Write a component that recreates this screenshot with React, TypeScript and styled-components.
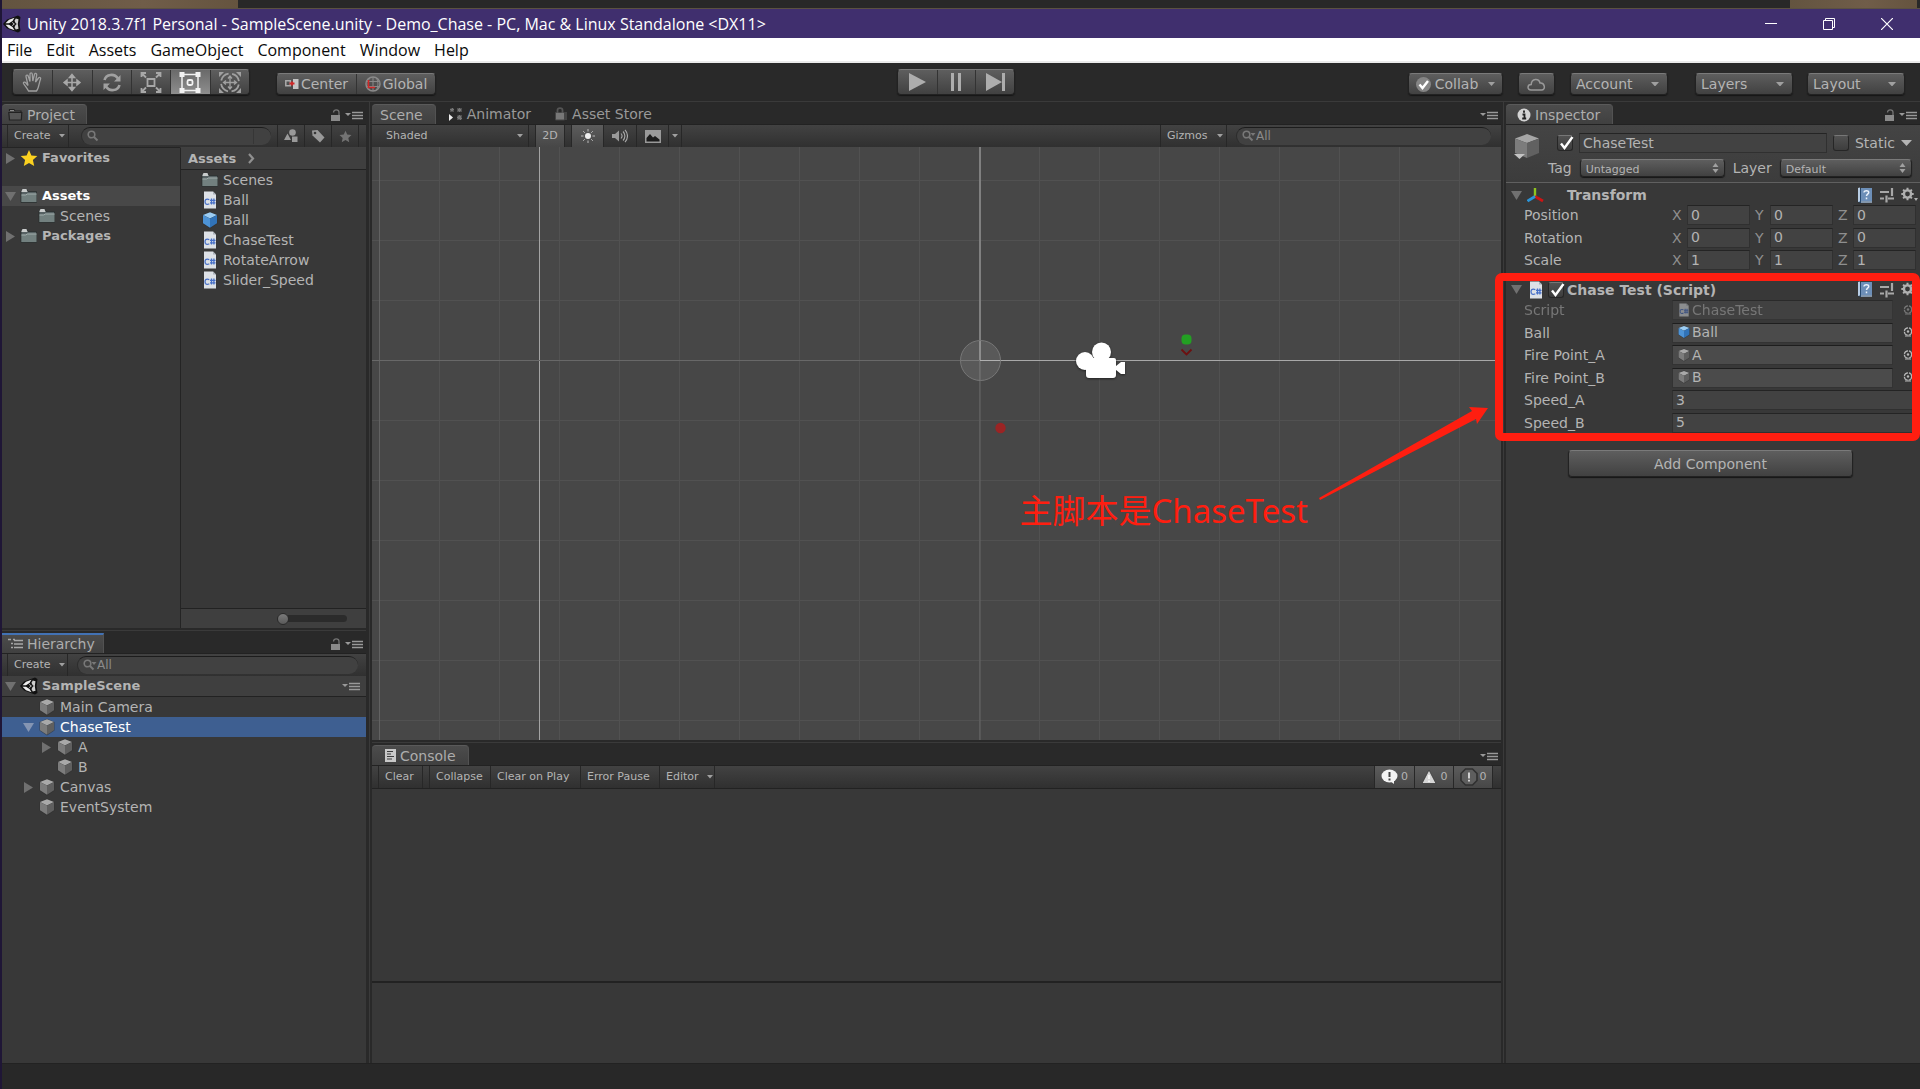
import React from "react";
import styled, { createGlobalStyle, css } from "styled-components";

const uiFont = '"DejaVu Sans", Verdana, sans-serif';
const systemFont = '"Open Sans", "Noto Sans", "Noto Sans CJK SC", sans-serif';

const c = {
  chrome: "#292929",
  panel: "#383838",
  edge: "#1f1f1f",
  seam: "#3a3a3a",
  text: "#b4b4b4",
  dim: "#6e6e6e",
  icon: "#a0a0a0",
  annotation: "#ff1e10",
};

const GlobalStyle = createGlobalStyle`
  * { box-sizing: border-box; }
  body { margin: 0; background: #1f1636; }
  button, input, select { font: inherit; color: inherit; margin: 0; padding: 0; border: 0; border-radius: 0; outline: 0; background: none; }
  ul { list-style: none; margin: 0; padding: 0; }
  svg { display: block; flex: none; }
`;

/* ---------- window frame ---------- */

const Shell = styled.div`
  min-height: 100vh;
  display: flex;
  flex-direction: column;
  padding-left: 2px;
  overflow: hidden;
  background: #1f1636;
  color: ${c.text};
  font: 14px/20px ${uiFont};
`;

const DesktopStrip = styled.div`
  height: 9px;
  display: flex;
  background: #282828;
  border-bottom: 1px solid #5b5142;
`;

const DesktopPatch = styled.div<{ $w: number; $push?: boolean }>`
  width: ${(p) => p.$w}px;
  margin-left: ${(p) => (p.$push ? "auto" : "0")};
  margin-right: ${(p) => (p.$push ? "3px" : "0")};
  background: linear-gradient(90deg, #635440, #705d49 60%, #65543f);
`;

const TitleBar = styled.header`
  height: 29px;
  display: flex;
  align-items: center;
  gap: 6px;
  padding: 0 4px 0 1px;
  background: #402f6e;
  color: #fff;
  font: 16px/28px ${systemFont};
  white-space: nowrap;
`;

const WindowButtons = styled.div`
  display: flex;
  margin-left: auto;
`;

const WindowButton = styled.button`
  width: 58px;
  height: 28px;
  display: flex;
  align-items: center;
  justify-content: center;
`;

const MenuBar = styled.nav`
  height: 25px;
  display: flex;
  background: #fff;
  border-bottom: 2px solid #ebebeb;
  color: #0a0a0a;
  font: 16px/24px ${systemFont};
`;

const MenuItem = styled.button`
  height: 23px;
  padding: 0 7px;
  white-space: nowrap;
  &:first-child { padding-left: 5px; }
`;

/* ---------- main toolbar ---------- */

const raised = css`
  border: 1px solid #222;
  border-top-color: #7a7a7a;
  border-radius: 4px;
  background: linear-gradient(#5e5e5e, #414141);
  box-shadow: 0 1px 1px #161616;
`;

const MainToolbar = styled.div`
  height: 39px;
  display: grid;
  grid-template-columns: 1fr auto 1fr;
  align-items: end;
  padding: 0 15px 6px 5px;
  background: ${c.chrome};
  border-bottom: 1px solid ${c.seam};
`;

const ToolbarSide = styled.div<{ $end?: boolean }>`
  display: flex;
  align-items: flex-end;
  justify-content: ${(p) => (p.$end ? "flex-end" : "flex-start")};
  gap: ${(p) => (p.$end ? 15 : 26)}px;
  padding-left: ${(p) => (p.$end ? 0 : 5)}px;
`;

const ButtonStrip = styled.div<{ $w: number; $h: number }>`
  ${raised}
  width: ${(p) => p.$w}px;
  height: ${(p) => p.$h}px;
  display: grid;
  grid-auto-flow: column;
  grid-auto-columns: 1fr;
  overflow: hidden;
`;

const StripButton = styled.button<{ $on?: boolean }>`
  display: flex;
  align-items: center;
  justify-content: center;
  gap: 2px;
  color: ${c.text};
  background: ${(p) => (p.$on ? "linear-gradient(#6a6a6a, #8e8e8e)" : "none")};
  & + & { border-left: 1px solid #333; }
`;

const RaisedButton = styled.button<{ $w: number; $h?: number }>`
  ${raised}
  width: ${(p) => p.$w}px;
  height: ${(p) => p.$h ?? 22}px;
  display: flex;
  align-items: center;
  justify-content: center;
  gap: 4px;
`;

const Group = styled.div<{ $gap: number; $left?: number }>`
  display: flex;
  gap: ${(p) => p.$gap}px;
  margin-left: ${(p) => p.$left ?? 0}px;
`;

/* ---------- drop-downs ---------- */

const SelectFrame = styled.span<{ $w?: number; $kind: "raised" | "flat" | "field" }>`
  position: relative;
  display: flex;
  align-items: center;
  ${(p) => (p.$w ? `width: ${p.$w}px;` : "flex: 1 1 0; min-width: 0;")}
  height: ${(p) => (p.$kind === "field" ? 18 : 22)}px;
  ${(p) => p.$kind !== "flat" && raised}
  font-size: ${(p) => (p.$kind === "raised" ? 14 : 11)}px;
  select {
    appearance: none;
    width: 100%;
    height: 100%;
    padding-left: ${(p) => (p.$kind === "flat" ? 7 : 5)}px;
    color: ${c.text};
  }
  svg {
    position: absolute;
    right: ${(p) => (p.$kind === "raised" ? 8 : 5)}px;
    pointer-events: none;
  }
`;

/* ---------- docks ---------- */

const Workspace = styled.main`
  flex: 1;
  display: grid;
  grid-template-columns: 367fr 1134fr 417fr;
  background: ${c.chrome};
`;

const Column = styled.div<{ $rows: string; $first?: boolean; $last?: boolean }>`
  min-width: 0;
  display: grid;
  grid-template-rows: ${(p) => p.$rows};
  border-left: ${(p) => (p.$first ? "0" : `1px solid ${c.seam}`)};
  padding-left: ${(p) => (p.$first ? 0 : 2)}px;
  padding-right: ${(p) => (p.$first ? 3 : p.$last ? 0 : 2)}px;
`;

const Dock = styled.section<{ $seam?: boolean }>`
  min-width: 0;
  min-height: 0;
  display: flex;
  flex-direction: column;
  ${(p) => p.$seam && `padding-bottom: 2px; border-bottom: 1px solid ${c.seam};`}
`;

const TabBar = styled.div`
  flex: none;
  height: 22px;
  display: flex;
  align-items: flex-end;
  background: ${c.chrome};
`;

const Tab = styled.button<{ $active?: boolean; $focus?: boolean; $l?: number; $r?: number }>`
  height: 20px;
  display: flex;
  align-items: center;
  gap: 4px;
  padding: 0 ${(p) => p.$r ?? 12}px 0 ${(p) => p.$l ?? 6}px;
  color: ${(p) => (p.$active ? "#adadad" : "#999")};
  white-space: nowrap;
  ${(p) =>
    p.$active &&
    css`
      background: linear-gradient(#4c4c4c, #404040);
      border-top: ${p.$focus ? "2px solid #4272b5" : "1px solid #5a5a5a"};
      border-right: 1px solid #525252;
      border-radius: ${p.$focus ? "0" : "4px 4px 0 0"};
    `}
`;

const TabTools = styled.div`
  display: flex;
  align-items: center;
  gap: 4px;
  height: 18px;
  margin-left: auto;
  padding-right: 3px;
`;

const IconButton = styled.button`
  display: flex;
  align-items: center;
  justify-content: center;
`;

const PanelToolbar = styled.div<{ $pad?: number }>`
  flex: none;
  height: 23px;
  display: flex;
  align-items: stretch;
  padding-left: ${(p) => p.$pad ?? 5}px;
  background: linear-gradient(#424242, #303030);
  border-top: 1px solid #222;
  font-size: 11px;
`;

const ToolCell = styled.button<{ $w: number; $on?: boolean; $open?: boolean; $text?: boolean; $gap?: number }>`
  width: ${(p) => p.$w}px;
  display: flex;
  align-items: center;
  justify-content: ${(p) => (p.$text ? "space-between" : "center")};
  gap: ${(p) => p.$gap ?? 8}px;
  padding: ${(p) => (p.$text ? "0 3px 0 6px" : "0")};
  color: ${c.text};
  white-space: nowrap;
  border-left: 1px solid #272727;
  border-right: ${(p) => (p.$open ? "1px solid #272727" : "0")};
  background: ${(p) => (p.$on ? "linear-gradient(#5c5c5c, #474747)" : "none")};
`;

const Spacer = styled.div<{ $w?: number }>`
  ${(p) => (p.$w ? `flex: none; width: ${p.$w}px;` : "flex: 1;")}
`;

const SearchBox = styled.label<{ $w?: number }>`
  ${(p) => (p.$w ? `width: ${p.$w}px;` : "flex: 1; min-width: 0;")}
  height: 18px;
  margin-top: 2px;
  display: flex;
  align-items: center;
  padding: 0 6px 1px 5px;
  border-radius: 9px;
  border-top: 1px solid #1c1c1c;
  border-left: 1px solid #2c2c2c;
  background: #414141;
  input {
    min-width: 0;
    flex: 1;
    height: 15px;
    font-size: 12px;
    line-height: 14px;
    color: #8a8a8a;
  }
  input::placeholder { color: #8a8a8a; opacity: 1; }
`;

const SearchCap = styled.span`
  width: 12px;
  height: 15px;
  border-left: 1px solid #363636;
`;

/* ---------- project & hierarchy ---------- */

const Split = styled.div`
  flex: 1;
  min-height: 0;
  display: grid;
  grid-template-columns: 178fr 186fr;
  background: ${c.panel};
`;

const Pane = styled.div<{ $line?: boolean }>`
  display: flex;
  flex-direction: column;
  border-top: 1px solid ${(p) => (p.$line ? "#242424" : "#404040")};
  border-left: ${(p) => (p.$line ? "0" : "1px solid #242424")};
`;

const Breadcrumb = styled.div`
  height: 22px;
  display: flex;
  align-items: center;
  gap: 12px;
  padding-left: 7px;
  background: #3f3f3f;
  border-bottom: 1px solid #222;
  font-weight: bold;
  font-size: 13px;
`;

const FileList = styled.ul`
  flex: 1;
  padding-left: 2px;
`;

const Row = styled.li<{ $depth?: number; $tone?: "open" | "selected"; $bold?: boolean; $after?: number }>`
  height: 20px;
  display: flex;
  align-items: center;
  gap: 4px;
  padding-left: ${(p) => (p.$depth ?? 0) * 18 + 2}px;
  margin-bottom: ${(p) => p.$after ?? 0}px;
  font-size: ${(p) => (p.$bold ? 13 : 14)}px;
  font-weight: ${(p) => (p.$bold ? "bold" : "normal")};
  color: ${(p) => (p.$tone ? "#fff" : c.text)};
  background: ${(p) => (p.$tone === "selected" ? "#3e5f91" : p.$tone === "open" ? "#484848" : "none")};
`;

const Fold = styled.span`
  width: 12px;
  display: flex;
  justify-content: center;
`;

const ZoomBar = styled.div`
  height: 20px;
  display: flex;
  align-items: center;
  justify-content: flex-end;
  padding-right: 19px;
  border-top: 1px solid #222;
  background: #3f3f3f;
`;

const ZoomSlider = styled.input`
  appearance: none;
  width: 70px;
  height: 7px;
  border-radius: 4px;
  background: linear-gradient(90deg, #3f3f3f 6px, #2b2b2b 6px);
  &::-webkit-slider-thumb {
    appearance: none;
    width: 12px;
    height: 12px;
    border-radius: 50%;
    border: 1px solid #2a2a2a;
    background: linear-gradient(#7a7a7a, #5a5a5a);
  }
`;

const TreeBody = styled.div`
  flex: 1;
  background: ${c.panel};
`;

const SceneRow = styled.div`
  height: 21px;
  display: flex;
  align-items: center;
  gap: 4px;
  padding: 0 6px 0 2px;
  background: #3f3f3f;
  border-bottom: 1px solid #222;
  font-size: 13px;
  font-weight: bold;
`;

/* ---------- scene ---------- */

const SceneCanvas = styled.div`
  position: relative;
  flex: 1;
  overflow: hidden;
  background: #474747;
  > svg { position: absolute; inset: 0; }
`;

const NoteText = styled.p`
  position: absolute;
  right: 193px;
  top: 344px;
  margin: 0;
  color: ${c.annotation};
  font: 33px/40px "Noto Sans", "Noto Sans CJK SC", sans-serif;
  white-space: nowrap;
`;

const NoteArrow = styled.span`
  position: absolute;
  right: 13px;
  top: 259px;
`;

/* ---------- console ---------- */

const ConsoleList = styled.div`
  flex: 190;
  background: ${c.panel};
  border-top: 1px solid #222;
  border-bottom: 2px solid #222;
`;

const ConsoleDetail = styled.div`
  flex: 79;
  background: ${c.panel};
`;

/* ---------- inspector ---------- */

const InspectorBody = styled.div`
  flex: 1;
  background: ${c.panel};
`;

const ObjectHeader = styled.div`
  display: flex;
  padding: 8px 8px 4px;
  border-top: 1px solid #222;
  border-bottom: 1px solid #606060;
  background: linear-gradient(#444, #3c3c3c);
`;

const ObjectLines = styled.div`
  flex: 1;
  min-width: 0;
  display: flex;
  flex-direction: column;
  gap: 5px;
  padding-left: 8px;
`;

const Line = styled.div<{ $gap: number; $left?: number }>`
  display: flex;
  align-items: center;
  gap: ${(p) => p.$gap}px;
  padding-left: ${(p) => p.$left ?? 0}px;
  label { white-space: nowrap; }
`;

const Field = styled.input`
  flex: 1;
  min-width: 0;
  width: 0;
  height: 20px;
  padding: 0 3px 1px;
  background: #424242;
  border: 1px solid #303030;
  border-top-color: #242424;
  color: ${c.text};
`;

const CheckFrame = styled.span`
  position: relative;
  width: 16px;
  height: 16px;
  flex: none;
  display: block;
  input {
    appearance: none;
    display: block;
    width: 16px;
    height: 16px;
    border: 1px solid #262626;
    border-top-color: #777;
    border-radius: 3px;
    background: linear-gradient(#525252, #3d3d3d);
  }
  svg { position: absolute; left: 2px; top: 0; pointer-events: none; }
`;

const Component = styled.section`
  position: relative;
`;

const ComponentTitle = styled.div<{ $h: number; $top: number }>`
  height: ${(p) => p.$h}px;
  display: flex;
  align-items: center;
  padding: ${(p) => p.$top}px 2px 0 5px;
  h2 { flex: 1; margin: 0; font-size: 14px; line-height: 20px; font-weight: bold; white-space: nowrap; }
`;

const Slot = styled.span<{ $w: number }>`
  flex: none;
  width: ${(p) => p.$w}px;
  padding-left: ${(p) => (p.$w === 24 ? 5 : 0)}px;
`;

const Properties = styled.div<{ $h: number }>`
  height: ${(p) => p.$h}px;
  display: grid;
  grid-auto-rows: 1fr;
  padding: 0 4px 0 18px;
`;

const Property = styled.div<{ $off?: boolean }>`
  display: flex;
  align-items: flex-start;
  opacity: ${(p) => (p.$off ? 0.5 : 1)};
  > label, > span:first-child { flex: none; width: 148px; white-space: nowrap; }
`;

const Vector = styled.div`
  flex: 1;
  display: grid;
  grid-template-columns: repeat(3, 1fr);
  gap: 5px;
  label { display: flex; min-width: 0; }
  label > span { width: 15px; flex: none; color: #8f8f8f; }
`;

const ObjectField = styled.button`
  flex: 1;
  height: 20px;
  display: flex;
  align-items: center;
  gap: 1px;
  padding: 0 4px 1px;
  background: #4b4b4b;
  border: 1px solid #333;
  border-top-color: #1e1e1e;
`;

const Picker = styled.button`
  width: 14px;
  height: 19px;
  margin: 0 1px 0 8px;
  display: flex;
  align-items: center;
  justify-content: center;
`;

const Highlight = styled.div`
  position: absolute;
  z-index: 2;
  inset: 0 0 -6px -11px;
  border: 8px solid ${c.annotation};
  border-radius: 7px;
  pointer-events: none;
`;

const AddRow = styled.div`
  display: flex;
  justify-content: center;
  padding: 15px 5px 0 0;
`;

const StatusBar = styled.footer`
  height: 26px;
  background: #282828;
  border-top: 1px solid #222;
`;

/* ---------- icons ---------- */

const Down = ({ s = 7, fill = c.icon }: { s?: number; fill?: string }) => (
  <svg width={s} height={(s + 1) / 2} viewBox="0 0 8 4" preserveAspectRatio="none"><path d="M0 0h8L4 4z" fill={fill} /></svg>
);
const Right = () => (
  <svg width="9" height="11" viewBox="0 0 9 11"><path d="M0 0 9 5.500 0 11z" fill="#707070" /></svg>
);
const Open = ({ fill = "#707070" }: { fill?: string }) => (
  <svg width="11" height="9" viewBox="0 0 11 9"><path d="M0 0h11L5.500 9z" fill={fill} /></svg>
);
const UpDown = () => (
  <svg width="7" height="10" viewBox="0 0 7 10"><path d="M3.500 0 6.500 4h-6zM.5 6h6l-3 4z" fill={c.icon} /></svg>
);
const PaneMenu = () => (
  <svg width="18" height="9" viewBox="0 0 18 9"><path d="M0 2h6L3 5z" fill="#999" /><path d="M7 1.500h11M7 4.500h11M7 7.500h11" stroke="#999" strokeWidth="1.400" /></svg>
);
const Lock = () => (
  <svg width="10" height="13" viewBox="0 0 10 13"><path d="M0 6h9v6H0z" fill="#8a8a8a" /><path d="M2.500 3.500C2.500 0 8 0 8 3.500V6" fill="none" stroke="#757575" strokeWidth="1.300" /></svg>
);
const UnityMark = ({ size = 18 }: { size?: number }) => (
  <svg width={size} height={size} viewBox="0 0 18 18">
    <path d="M0 9 4 4.500 15 .5 17.500 2 16.500 9l1 7-2.500 1.500L4 13.500z" fill="#111" />
    <path d="M2.500 8.200 6 4.800 11.500 2.800 9.500 6 6 8.200zM2.500 9.800 6 13.200l5.500 2L9.500 12 6 9.800z" fill="#ececec" />
    <path d="M12.800 3.400 15.500 4.200 14.800 9l.7 4.800-2.700.8L11.400 12 12.800 9 11.400 6z" fill="#cfcfcf" />
    <path d="M7.500 9h6M11 6.500 12.400 9 11 11.500" stroke="#111" strokeWidth="1.200" fill="none" />
    <path d="M9.200 7.400 11.400 9l-2.200 1.600" stroke="#ececec" strokeWidth=".8" fill="none" />
  </svg>
);
const Folder = () => (
  <svg width="18" height="16" viewBox="0 0 18 16">
    <path d="M1 3.500 2 1.500h5l1 2h8.500V14.500H1z" fill="#566163" stroke="#2a2e2f" strokeWidth=".8" />
    <path d="M1.500 3 2.500 1h4l1 3h-6z" fill="#c9cccc" />
    <path d="M1.500 6.500h4l2-1h9V14h-15z" fill="#72807f" />
    <path d="M1.500 7h4l2-1h9" stroke="#a0acac" fill="none" />
  </svg>
);
const FolderTab = () => (
  <svg width="15" height="13" viewBox="0 0 15 13"><path d="M1.500 3V1.500h4.500l1 1.500h6v1.500M.8 4.500h13l-.5 7.500H1.500z" fill="#565656" stroke="#222" strokeWidth="1.200" /><path d="M2 2.500h4" stroke="#8a8a8a" /></svg>
);
const CSharp = ({ size = 18 }: { size?: number }) => (
  <svg width={size} height={size} viewBox="0 0 18 18">
    <path d="M3 .5h9l3 3V17.500H3z" fill="#dde1e6" />
    <path d="M12 .5v3h3z" fill="#aab0b8" />
    <path d="M8.300 8.600c-3.500-1.200-5 .6-4 3.600.7 1.500 2.500 1.400 4 .6M10.500 7.500v6M12.900 7.500v6M9 9.300h5.500M9 11.800h5.500" fill="none" stroke="#4770c8" strokeWidth="1.300" />
  </svg>
);
const Cube = ({ blue, size = 18 }: { blue?: boolean; size?: number }) => {
  const f = blue ? ["#9ccdf3", "#4d93d6", "#3173b8"] : ["#a9a9a9", "#7c7c7c", "#5f5f5f"];
  return (
    <svg width={size} height={size} viewBox="0 0 18 18">
      <path d="M9 .8 16.500 4v8.500L9 17.500 1.500 12.500V4z" fill="#2b2b2b" opacity=".6" />
      <path d="M9 1.200 16 4 9 7.400 2 4z" fill={f[0]} />
      <path d="M2 4 9 7.400v9.400l-7-4.600z" fill={f[1]} />
      <path d="M16 4 9 7.400v9.400l7-4.600z" fill={f[2]} />
    </svg>
  );
};
const Star = ({ fill, size = 18 }: { fill: string; size?: number }) => (
  <svg width={size} height={size} viewBox="0 0 18 18"><path d="M9 1l2.400 5.400 5.900.6-4.400 4 1.300 5.900L9 13.900 3.800 16.900l1.300-5.900-4.400-4 5.900-.6z" fill={fill} /></svg>
);
const Magnifier = ({ menu }: { menu?: boolean }) => (
  <svg width={menu ? 14 : 12} height="12" viewBox={menu ? "0 0 14 12" : "0 0 12 12"}>
    <circle cx="4.500" cy="4.500" r="3.300" fill="none" stroke="#787878" strokeWidth="1.600" />
    <path d="M7 7l3.500 3.500" stroke="#787878" strokeWidth="2" />
    {menu && <path d="M8.500 3h5L11 6z" fill="#787878" />}
  </svg>
);
const Check = ({ s = 16 }: { s?: number }) => (
  <svg width={s} height={s} viewBox="0 0 16 16"><path d="M2 8.500 5.500 13 13.500 2" fill="none" stroke="#fff" strokeWidth="2.400" /></svg>
);
const Book = () => (
  <svg width="16" height="17" viewBox="0 0 16 17">
    <path d="M1 1.500h14v14l-11 .5-3-1z" fill="#27496f" />
    <path d="M4 1h11v13H4z" fill="#6d8fb8" /><path d="M1 1l2-.5V14.500l-2 .5z" fill="#b8cde4" />
    <path d="M4 15h11" stroke="#dce6f0" />
    <path d="M7 5.500c0-2.500 5-2.500 4.700.2-.2 1.500-2.200 1.500-2.200 3.300M9.500 10.500v1.700" stroke="#e9f1fa" strokeWidth="1.500" fill="none" />
  </svg>
);
const Preset = () => (
  <svg width="14" height="16" viewBox="0 0 14 16"><path d="M0 5h9M12 1v8M0 11.500h4M6.500 8.500v7M8 11.500h6" stroke="#a8a8a8" strokeWidth="2.200" /></svg>
);
const Gear = () => (
  <svg width="17" height="16" viewBox="0 0 17 16">
    <circle cx="6.500" cy="7" r="3.600" fill="none" stroke="#b0b0b0" strokeWidth="2.400" />
    <path d="M6.500 .8v2.400M6.500 10.800v2.400M.3 7h2.400M10.300 7h2.400M2.100 2.600l1.700 1.700M9.200 9.700l1.700 1.700M10.900 2.600 9.200 4.300M3.800 9.700l-1.700 1.700" stroke="#b0b0b0" strokeWidth="2" />
    <path d="M13 11h4l-2 3z" fill="#b0b0b0" />
  </svg>
);
const Target = () => (
  <svg width="10" height="10" viewBox="0 0 10 10"><circle cx="5" cy="4.500" r="3.700" fill="none" stroke="#b8b8b8" strokeWidth="1.200" strokeDasharray="5 1" /><circle cx="5" cy="4.500" r="1.200" fill="#b8b8b8" /><path d="M2 9h6" stroke="#b8b8b8" /></svg>
);

const toolIcons: [string, React.ReactNode][] = [
  ["Hand", <path key="p" d="M6.500 20C5 17 3 15 1.500 12.500 1 11 3 10.500 4 12l2 2.500L4 5.500C3.700 4 5.700 3.500 6.200 5L8 10.500 8 3c0-1.500 2.200-1.500 2.300 0l.5 7 1.700-6.700c.4-1.500 2.400-1 2.200.5L13.500 11 16.500 7c1-1.300 2.700-.3 2 1.200C17 11.500 17 17 14.500 20z" fill="none" stroke="#a0a0a0" strokeWidth="1.300" />],
  ["Move", <path key="p" d="M11 5v13M4.500 11.500h13M11 3.500l2.500 3h-5zM11 19.500l2.500-3h-5zM3 11.500 6 9v5zM19 11.500 16 9v5z" fill="#a8a8a8" stroke="#a8a8a8" strokeWidth="1.500" />],
  ["Rotate", <g key="p"><path d="M3.500 9C5 3 13.500 2 17 7.500M18.500 14c-1.500 6-10 7-13.500 1.500" fill="none" stroke="#a0a0a0" strokeWidth="2.600" /><path d="M19.500 4v6.500h-6.500zM2.500 19v-6.500H9z" fill="#a0a0a0" /></g>],
  ["Scale", <path key="p" d="M7.500 8h7v7h-7zM1.500 6V2H6M1.500 2l4.500 4.500M16 2h4.500v4M20.500 2 16 6.500M1.500 17v4H6M1.500 21 6 16.500M20.500 17v4H16M20.500 21 16 16.500" fill="none" stroke="#a8a8a8" strokeWidth="1.800" />],
  ["Rect", <g key="p"><path d="M3 3.500h16v16H3z" fill="none" stroke="#f2f2f2" strokeWidth="1.500" /><path d="M.5 1h5v5h-5zM16.500 1h5v5h-5zM.5 17h5v5h-5zM16.500 17h5v5h-5z" fill="#f2f2f2" /><rect x="8.500" y="9" width="5" height="5" rx="1.500" fill="none" stroke="#f2f2f2" strokeWidth="1.800" /></g>],
  ["Transform", <g key="p"><path d="M11 5.500v12M5 11.500h12M9 7.500l2-2.500 2 2.500M9 15.500l2 2.500 2-2.500M7 9.500l-2.500 2L7 13.500M15 9.500l2.500 2-2.500 2" fill="none" stroke="#a0a0a0" strokeWidth="1.300" /><circle cx="11" cy="11.500" r="9" fill="none" stroke="#a0a0a0" strokeWidth="1.800" strokeDasharray="10.500 3.600" strokeDashoffset="-2" /><path d="M0 1h5L0 6zM22 1h-5l5 5zM0 22h5l-5-5zM22 22h-5l5-5z" fill="#a0a0a0" /></g>],
];

/* ---------- parts ---------- */

const Choice = ({ name, value, w, kind }: { name: string; value: string; w?: number; kind: "raised" | "flat" | "field" }) => (
  <SelectFrame $w={w} $kind={kind}>
    <select id={name} aria-label={name} defaultValue={value}><option>{value}</option></select>
    {kind === "field" ? <UpDown /> : <Down s={kind === "raised" ? 8 : 6} />}
  </SelectFrame>
);

const Tick = ({ id, on, label }: { id: string; on?: boolean; label?: string }) => (
  <CheckFrame><input type="checkbox" id={id} aria-label={label} defaultChecked={on} />{on && <Check />}</CheckFrame>
);

const PaneTools = ({ lock }: { lock?: boolean }) => (
  <TabTools>
    {lock && <IconButton aria-label="Lock"><Lock /></IconButton>}
    <IconButton aria-label="Pane options"><PaneMenu /></IconButton>
  </TabTools>
);

const ComponentTools = () => (
  <Group $gap={7}>
    <IconButton aria-label="Help"><Book /></IconButton>
    <IconButton aria-label="Presets"><Preset /></IconButton>
    <IconButton aria-label="Settings"><Gear /></IconButton>
  </Group>
);

const files: { name: string; icon: React.ReactNode }[] = [
  { name: "Scenes", icon: <Folder /> },
  { name: "Ball", icon: <CSharp /> },
  { name: "Ball", icon: <Cube blue /> },
  { name: "ChaseTest", icon: <CSharp /> },
  { name: "RotateArrow", icon: <CSharp /> },
  { name: "Slider_Speed", icon: <CSharp /> },
];

const objects: { name: string; depth: number; fold?: "open" | "closed"; selected?: boolean }[] = [
  { name: "Main Camera", depth: 1 },
  { name: "ChaseTest", depth: 1, fold: "open", selected: true },
  { name: "A", depth: 2, fold: "closed" },
  { name: "B", depth: 2 },
  { name: "Canvas", depth: 1, fold: "closed" },
  { name: "EventSystem", depth: 1 },
];

const ProjectDock = () => (
  <Dock $seam>
    <TabBar>
      <Tab $active $r={11}><FolderTab />Project</Tab>
      <PaneTools lock />
    </TabBar>
    <PanelToolbar>
      <ToolCell $w={62} $open $text>Create <Down s={6} /></ToolCell>
      <Spacer $w={12} />
      <SearchBox><Magnifier /><input aria-label="Search project" /><SearchCap /></SearchBox>
      <Spacer $w={6} />
      <ToolCell $w={27} aria-label="Search by type"><svg width="14" height="14" viewBox="0 0 14 14"><path d="M0 11 3.500 4.500 7 11z" fill="#999" /><circle cx="8.500" cy="3.500" r="3.300" fill="#999" /><path d="M8 7.500h5.500V13H8z" fill="#999" /></svg></ToolCell>
      <ToolCell $w={27} aria-label="Search by label"><svg width="14" height="14" viewBox="0 0 14 14"><path d="M1 1.500 6.500 1 13.500 8.500 9 13.500 1.500 6.500z" fill="#999" /><circle cx="4" cy="4" r="1.300" fill="#383838" /></svg></ToolCell>
      <ToolCell $w={28} $open aria-label="Save search"><Star fill="#737373" size={13} /></ToolCell>
      <Spacer $w={7} />
    </PanelToolbar>
    <Split>
      <Pane $line>
        <ul>
          <Row $bold $after={18}><Fold><Right /></Fold><Star fill="#fbd120" />Favorites</Row>
          <Row $bold $tone="open"><Fold><Open /></Fold><Folder />Assets</Row>
          <Row $depth={1}><Fold /><Folder />Scenes</Row>
          <Row $bold><Fold><Right /></Fold><Folder />Packages</Row>
        </ul>
      </Pane>
      <Pane>
        <Breadcrumb>Assets<svg width="7" height="11" viewBox="0 0 7 11"><path d="M1 1l4 4.500L1 10" fill="none" stroke="#909090" strokeWidth="2.200" /></svg></Breadcrumb>
        <FileList>
          {files.map((f, i) => <Row key={i}><Fold />{f.icon}{f.name}</Row>)}
        </FileList>
        <ZoomBar><ZoomSlider type="range" min={0} max={100} defaultValue={0} aria-label="Icon size" /></ZoomBar>
      </Pane>
    </Split>
  </Dock>
);

const HierarchyDock = () => (
  <Dock>
    <TabBar>
      <Tab $active $focus $r={8}>
        <svg width="15" height="12" viewBox="0 0 15 12"><path d="M0 1.500h3M5 1.500h2M3 5.500h2M3 9.500h2M6 2.500h9M6 6h9M6 9.500h9" stroke="#a8a8a8" strokeWidth="1.500" /></svg>Hierarchy
      </Tab>
      <PaneTools lock />
    </TabBar>
    <PanelToolbar>
      <ToolCell $w={61} $open $text>Create <Down s={6} /></ToolCell>
      <Spacer $w={9} />
      <SearchBox><Magnifier menu /><input placeholder="All" aria-label="Search hierarchy" /></SearchBox>
      <Spacer $w={8} />
    </PanelToolbar>
    <TreeBody>
      <SceneRow><Fold><Open /></Fold><UnityMark />SampleScene<Spacer /><PaneMenu /></SceneRow>
      <ul>
        {objects.map((o) => (
          <Row key={o.name} $depth={o.depth} $tone={o.selected ? "selected" : undefined}>
            <Fold>{o.fold === "open" ? <Open fill="#8495b3" /> : o.fold ? <Right /> : null}</Fold>
            <Cube />{o.name}
          </Row>
        ))}
      </ul>
    </TreeBody>
  </Dock>
);

const SceneDock = () => (
  <Dock $seam>
    <TabBar>
      <Tab $active $l={8}>Scene</Tab>
      <Tab $l={12} $r={11}>
        <svg width="15" height="15" viewBox="0 0 15 15"><path d="M2 1h4v4H2zM9 1h5v4H9zM9 8h5v5H9z" fill="#777" strokeDasharray="2 1" stroke="#2b2b2b" /><path d="M1 7l4 3.500L1 14z" fill="#eee" /></svg>Animator
      </Tab>
      <Tab $l={12}>
        <svg width="14" height="14" viewBox="0 0 14 14"><path d="M1.500 5.500h9V13h-9z" fill="#777" stroke="#444" /><path d="M11 5h2v8h-2z" fill="#444" /><path d="M3.500 6V3C3.500 .5 8.500 .5 8.500 3v3" fill="none" stroke="#555" strokeWidth="1.800" /></svg>Asset Store
      </Tab>
      <PaneTools />
    </TabBar>
    <PanelToolbar $pad={7}>
      <Choice name="Draw mode" value="Shaded" w={149} kind="flat" />
      <ToolCell $w={7} aria-hidden="true" tabIndex={-1} />
      <ToolCell $w={29} $on>2D</ToolCell>
      <ToolCell $w={7} aria-hidden="true" tabIndex={-1} />
      <ToolCell $w={32} $on aria-label="Scene lighting"><svg width="14" height="14" viewBox="0 0 14 14"><circle cx="7" cy="7" r="3" fill="#eee" /><path d="M7 0v2.500M7 11.500V14M0 7h2.500M11.500 7H14M2.200 2.200l1.600 1.600M10.200 10.200l1.600 1.600M11.800 2.200l-1.600 1.600M3.800 10.200l-1.600 1.600" stroke="#bbb" /></svg></ToolCell>
      <ToolCell $w={33} aria-label="Scene audio"><svg width="16" height="14" viewBox="0 0 16 14"><path d="M0 5h3l4-3.500v11L3 9H0z" fill="#999" /><path d="M9 4.500c1.300 1.500 1.300 3.500 0 5M11 2.500c2.500 2.500 2.500 6.500 0 9M13 .8c3.300 3.500 3.300 9 0 12.400" fill="none" stroke="#aaa" strokeWidth="1.100" /></svg></ToolCell>
      <ToolCell $w={32} aria-label="Effects"><svg width="16" height="13" viewBox="0 0 16 13"><path d="M0 0h16v13H0z" fill="#999" /><path d="M1.500 11.500V8L5 4l3 3.500 2-1.500 4.500 3.500v2z" fill="#1b1b1b" /></svg></ToolCell>
      <ToolCell $w={14} $open aria-label="Effects menu"><Down s={6} /></ToolCell>
      <Spacer />
      <ToolCell $w={67} $open $text>Gizmos <Down s={6} /></ToolCell>
      <Spacer $w={9} />
      <SearchBox $w={255}><Magnifier menu /><input placeholder="All" aria-label="Search scene" /></SearchBox>
      <Spacer $w={10} />
    </PanelToolbar>
    <SceneCanvas>
      <svg width="100%" height="100%">
        <defs>
          <pattern id="grid" x="7" y="33" width="60" height="60" patternUnits="userSpaceOnUse">
            <path d="M0 .5h60M.5 0v60" stroke="#515151" />
          </pattern>
        </defs>
        <rect width="100%" height="100%" fill="url(#grid)" />
        <path d="M7.500 0v1200" stroke="#626262" />
        <path d="M167.500 0v1200" stroke="#a4a4a4" />
        <path d="M0 213.500h608M608 213v1200" stroke="#686868" />
        <path d="M608 0v213" stroke="#808080" strokeWidth="2" />
        <path d="M608 213.500h2400" stroke="#a8a8a8" />
        <circle cx="608.500" cy="213.500" r="20" fill="#fff" fillOpacity=".1" stroke="#777" />
        <g fill="#fff" filter="drop-shadow(0 1px 1px #222)">
          <circle cx="713" cy="214" r="9" />
          <circle cx="729.500" cy="205" r="9.500" />
          <path d="M713 211h29a2 2 0 0 1 2 2v6l5-4h4v12h-4l-5-4v5a3 3 0 0 1-3 3h-24a3 3 0 0 1-3-3v-8z" />
        </g>
        <rect x="809.500" y="187.500" width="10" height="10" rx="4" fill="#23a023" />
        <path d="M809.500 202.500l5 5 5-5" fill="none" stroke="#6d1010" strokeWidth="1.800" />
        <circle cx="628.500" cy="281" r="5.200" fill="#9b2424" />
      </svg>
      <NoteText lang="zh-CN">主脚本是ChaseTest</NoteText>
      <NoteArrow><svg width="169" height="94" viewBox="0 0 169 94"><path d="M0 92 153 5 150 1 169 2 158 18 157 13 1 94z" fill={c.annotation} /></svg></NoteArrow>
    </SceneCanvas>
  </Dock>
);

const ConsoleDock = () => (
  <Dock>
    <TabBar>
      <Tab $active $l={13} $r={12}>
        <svg width="11" height="13" viewBox="0 0 11 13"><path d="M0 0h11v13H0z" fill="#c8c8c8" /><path d="M2 2.500h6M2 5h4M2 7.500h7M2 10h5" stroke="#3a3a3a" strokeWidth="1.200" /></svg>Console
      </Tab>
      <PaneTools />
    </TabBar>
    <PanelToolbar $pad={6}>
      <ToolCell $w={44} $text>Clear</ToolCell>
      <ToolCell $w={7} aria-hidden="true" tabIndex={-1} />
      <ToolCell $w={61} $text>Collapse</ToolCell>
      <ToolCell $w={90} $text>Clear on Play</ToolCell>
      <ToolCell $w={79} $text>Error Pause</ToolCell>
      <ToolCell $w={56} $open $text>Editor <Down s={6} /></ToolCell>
      <Spacer />
      <ToolCell $w={40} $on $gap={3} aria-label="Messages"><svg width="17" height="16" viewBox="0 0 17 16"><ellipse cx="8.500" cy="7" rx="8" ry="6.500" fill="#f4f4f4" /><path d="M9 12l4 3v-4z" fill="#f4f4f4" /><path d="M8.500 3v5M8.500 9.500v2" stroke="#444" strokeWidth="2" /></svg>0</ToolCell>
      <ToolCell $w={39} $on $gap={4} aria-label="Warnings"><svg width="16" height="16" viewBox="0 0 16 16"><path d="M8 1 15 14.500H1z" fill="#d6d6d6" stroke="#3a3a3a" strokeWidth=".8" /><path d="M8 6v4M8 11.500v1.500" stroke="#fff" strokeWidth="1.400" /></svg>0</ToolCell>
      <ToolCell $w={40} $on $open $gap={2} aria-label="Errors"><svg width="18" height="18" viewBox="0 0 18 18"><path d="M5.500 1h7L17 5.500v7L12.500 17h-7L1 12.500v-7z" fill="#5e5e5e" stroke="#303030" strokeWidth="1.600" /><path d="M9 4.500v6M9 11.800v1.800" stroke="#ddd" strokeWidth="1.800" /></svg>0</ToolCell>
      <Spacer $w={8} />
    </PanelToolbar>
    <ConsoleList />
    <ConsoleDetail />
  </Dock>
);

const VectorRow = ({ name, value }: { name: string; value: string }) => (
  <Property>
    <span>{name}</span>
    <Vector>
      {["X", "Y", "Z"].map((axis) => (
        <label key={axis}><span>{axis}</span><Field defaultValue={value} aria-label={`${name} ${axis}`} /></label>
      ))}
    </Vector>
  </Property>
);

const ReferenceRow = ({ name, value, icon, off }: { name: string; value: string; icon: React.ReactNode; off?: boolean }) => (
  <Property $off={off}>
    <span>{name}</span>
    <ObjectField disabled={off}>{icon}{value}</ObjectField>
    <Picker aria-label={`Select ${name}`} disabled={off}><Target /></Picker>
  </Property>
);

const NumberRow = ({ name, value }: { name: string; value: string }) => (
  <Property>
    <label htmlFor={name}>{name}</label>
    <Field id={name} defaultValue={value} />
  </Property>
);

const InspectorDock = () => (
  <Dock>
    <TabBar>
      <Tab $active $l={11} $r={12}>
        <svg width="14" height="14" viewBox="0 0 14 14"><circle cx="7" cy="7" r="6.500" fill="#d4d4d4" /><path d="M7 2.500v2.200M5.500 6.500h2v4M5.200 10.500h4" stroke="#222" strokeWidth="1.800" fill="none" /></svg>Inspector
      </Tab>
      <PaneTools lock />
    </TabBar>
    <InspectorBody>
      <ObjectHeader>
        <svg width="26" height="28" viewBox="0 0 26 28"><path d="M13 1 25 5.500 13 10 1 5.500z" fill="#a6a6a6" /><path d="M1 5.500 13 10v15L1 20z" fill="#7c7c7c" /><path d="M25 5.500 13 10v15l12-5z" fill="#616161" /><path d="M0 21h11l-5.500 5z" fill="#c4c4c4" /></svg>
        <ObjectLines>
          <Line $gap={6} $left={9}>
            <Tick id="active" on label="Active" />
            <Field defaultValue="ChaseTest" aria-label="Name" />
            <Tick id="static" />
            <label htmlFor="static">Static</label>
            <IconButton aria-label="Static options"><Down s={11} fill="#b4b4b4" /></IconButton>
          </Line>
          <Line $gap={8}>
            <label htmlFor="Tag">Tag</label>
            <Choice name="Tag" value="Untagged" w={145} kind="field" />
            <label htmlFor="Layer">Layer</label>
            <Choice name="Layer" value="Default" kind="field" />
          </Line>
        </ObjectLines>
      </ObjectHeader>
      <Component>
        <ComponentTitle $h={22} $top={2}>
          <Slot $w={16}><Open /></Slot>
          <Slot $w={16}><svg width="17" height="16" viewBox="0 0 17 16"><path d="M8 10V1" stroke="#8fc31f" strokeWidth="2.400" /><path d="M8 9.500l8 4.500" stroke="#cc1414" strokeWidth="2.800" /><path d="M8 9.500l-7.500 4.500" stroke="#2a94d8" strokeWidth="2.800" /></svg></Slot>
          <Slot $w={24} />
          <h2>Transform</h2>
          <ComponentTools />
        </ComponentTitle>
        <Properties $h={68}>
          <VectorRow name="Position" value="0" />
          <VectorRow name="Rotation" value="0" />
          <VectorRow name="Scale" value="1" />
        </Properties>
      </Component>
      <Component>
        <ComponentTitle $h={27} $top={6}>
          <Slot $w={16}><Open /></Slot>
          <Slot $w={16}><CSharp /></Slot>
          <Slot $w={24}><Tick id="enabled" on label="Enabled" /></Slot>
          <h2>Chase Test (Script)</h2>
          <ComponentTools />
        </ComponentTitle>
        <Properties $h={135}>
          <ReferenceRow off name="Script" value="ChaseTest" icon={<CSharp size={14} />} />
          <ReferenceRow name="Ball" value="Ball" icon={<Cube blue size={14} />} />
          <ReferenceRow name="Fire Point_A" value="A" icon={<Cube size={14} />} />
          <ReferenceRow name="Fire Point_B" value="B" icon={<Cube size={14} />} />
          <NumberRow name="Speed_A" value="3" />
          <NumberRow name="Speed_B" value="5" />
        </Properties>
        <Highlight />
      </Component>
      <AddRow><RaisedButton $w={285} $h={27}>Add Component</RaisedButton></AddRow>
    </InspectorBody>
  </Dock>
);

export default function App() {
  return (
    <Shell>
      <GlobalStyle />
      <DesktopStrip><DesktopPatch $w={236} /><DesktopPatch $w={127} $push /></DesktopStrip>
      <TitleBar>
        <UnityMark />
        <span>Unity 2018.3.7f1 Personal - SampleScene.unity - Demo_Chase - PC, Mac &amp; Linux Standalone &lt;DX11&gt;</span>
        <WindowButtons>
          <WindowButton aria-label="Minimize"><svg width="12" height="12"><path d="M0 5.500h12" stroke="#fff" /></svg></WindowButton>
          <WindowButton aria-label="Restore"><svg width="12" height="12"><path d="M.5 2.500h9v9h-9zM2.500 2.500v-2h9v9h-2" fill="none" stroke="#fff" /></svg></WindowButton>
          <WindowButton aria-label="Close"><svg width="12" height="12"><path d="M0 0l12 12M12 0 0 12" stroke="#fff" strokeWidth="1.200" /></svg></WindowButton>
        </WindowButtons>
      </TitleBar>
      <MenuBar>
        {["File", "Edit", "Assets", "GameObject", "Component", "Window", "Help"].map((m) => <MenuItem key={m}>{m}</MenuItem>)}
      </MenuBar>
      <MainToolbar>
        <ToolbarSide>
          <ButtonStrip $w={238} $h={26}>
            {toolIcons.map(([name, shape]) => (
              <StripButton key={name} aria-label={name} $on={name === "Rect"}><svg width="22" height="23" viewBox="0 0 22 23">{shape}</svg></StripButton>
            ))}
          </ButtonStrip>
          <ButtonStrip $w={160} $h={22}>
            <StripButton><svg width="14" height="12" viewBox="0 0 14 12"><path d="M.8 2.800h4.500v5H.8z" fill="none" stroke="#aaa" strokeWidth="1.500" /><path d="M8 1h5.500v10H8z" fill="#c4c4c4" /><path d="M4.500 5.500h5M7 3.500v4" stroke="#d02828" strokeWidth="1.800" /></svg>Center</StripButton>
            <StripButton><svg width="16" height="16" viewBox="0 0 16 16"><circle cx="8" cy="8" r="7" fill="none" stroke="#8a8a8a" strokeWidth="1.500" /><path d="M8 1v14M1.500 5.500h13M1.500 10.500h13M4.500 2C2.500 6 2.500 10 4.500 14M11.500 2c2 4 2 8 0 12" stroke="#8a8a8a" fill="none" /><path d="M3.500 4v7.500H10" stroke="#d02828" strokeWidth="1.600" fill="none" /></svg>Global</StripButton>
          </ButtonStrip>
        </ToolbarSide>
        <ButtonStrip $w={118} $h={26}>
          <StripButton aria-label="Play"><svg width="17" height="18"><path d="M0 0 17 9 0 18z" fill="#adadad" /></svg></StripButton>
          <StripButton aria-label="Pause"><svg width="12" height="18"><path d="M1 0h3v18H1zM8 0h3v18H8z" fill="#adadad" /></svg></StripButton>
          <StripButton aria-label="Step"><svg width="19" height="18"><path d="M0 0 16 9 0 18zM16 0h3v18h-3z" fill="#adadad" /></svg></StripButton>
        </ButtonStrip>
        <ToolbarSide $end>
          <RaisedButton $w={95}>
            <svg width="15" height="15" viewBox="0 0 15 15"><circle cx="7.500" cy="7.500" r="7.500" fill="#858585" /><path d="M3.500 7.500l3 3.500 5.500-7" fill="none" stroke="#fff" strokeWidth="2.400" /></svg>
            Collab<Spacer $w={2} /><Down s={7} />
          </RaisedButton>
          <RaisedButton $w={37} aria-label="Services"><svg width="19" height="13" viewBox="0 0 19 13"><path d="M4 12C0 12 0 6.500 4.200 6.500 4.500 0 12 0 13 5c5-.5 6 7 1.500 7z" fill="none" stroke="#999" strokeWidth="1.500" /></svg></RaisedButton>
          <Choice name="Account" value="Account" w={98} kind="raised" />
          <Group $gap={14} $left={12}>
            <Choice name="Layers" value="Layers" w={98} kind="raised" />
            <Choice name="Layout" value="Layout" w={98} kind="raised" />
          </Group>
        </ToolbarSide>
      </MainToolbar>
      <Workspace>
        <Column $rows="529fr 432fr" $first><ProjectDock /><HierarchyDock /></Column>
        <Column $rows="641fr 320fr"><SceneDock /><ConsoleDock /></Column>
        <Column $rows="1fr" $last><InspectorDock /></Column>
      </Workspace>
      <StatusBar />
    </Shell>
  );
}
